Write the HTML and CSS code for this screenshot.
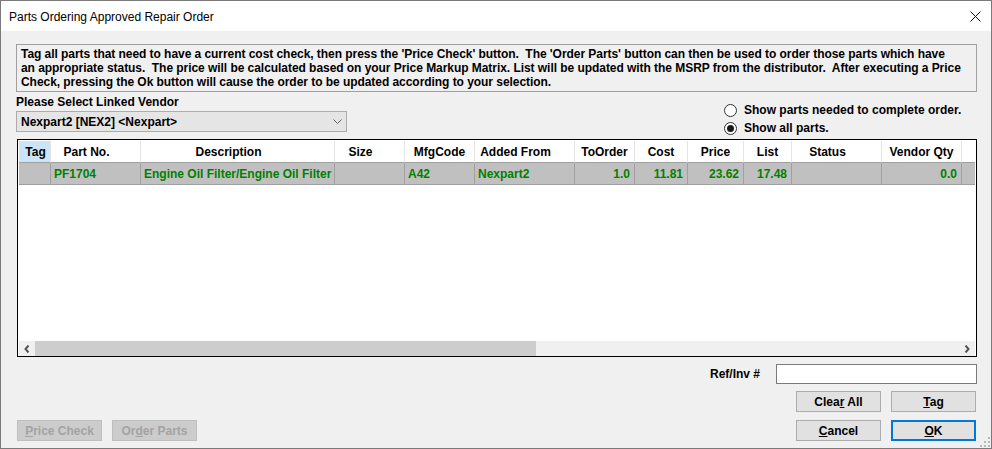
FILE: index.html
```html
<!DOCTYPE html>
<html>
<head>
<meta charset="utf-8">
<link rel="stylesheet" href="styles.css">
</head>
<body>
<div class="window">
  <div class="titlebar">
    <span class="title">Parts Ordering Approved Repair Order</span>
    <svg class="close" width="11" height="11" viewBox="0 0 11 11"><path d="M0.5 0.5 L10.5 10.5 M10.5 0.5 L0.5 10.5" stroke="#111" stroke-width="1" fill="none"/></svg>
  </div>
  <div class="content">
    <div class="info">
      <div class="line">Tag all parts that need to have a current cost check, then press the 'Price Check' button.&nbsp; The 'Order Parts' button can then be used to order those parts which have</div>
      <div class="line">an appropriate status.&nbsp; The price will be calculated based on your Price Markup Matrix. List will be updated with the MSRP from the distributor.&nbsp; After executing a Price</div>
      <div class="line">Check, pressing the Ok button will cause the order to be updated according to your selection.</div>
    </div>
    <div class="vendor-row">
      <div class="vendor">
        <div class="label">Please Select Linked Vendor</div>
        <div class="combo">
          <span>Nexpart2 [NEX2] &lt;Nexpart&gt;</span>
          <svg class="chev" width="9" height="5" viewBox="0 0 9 5"><path d="M0.5 0.5 L4.5 4.5 L8.5 0.5" stroke="#606060" stroke-width="1" fill="none"/></svg>
        </div>
      </div>
      <div class="radios">
        <div class="radio"><span class="circle"></span><span>Show parts needed to complete order.</span></div>
        <div class="radio"><span class="circle checked"></span><span>Show all parts.</span></div>
      </div>
    </div>
    <div class="grid">
      <div class="row head">
        <div class="c tagh">Tag</div>
        <div class="c s">Part No.</div>
        <div class="c s">Description</div>
        <div class="c s">Size</div>
        <div class="c">MfgCode</div>
        <div class="c s">Added From</div>
        <div class="c">ToOrder</div>
        <div class="c">Cost</div>
        <div class="c">Price</div>
        <div class="c">List</div>
        <div class="c s">Status</div>
        <div class="c">Vendor Qty</div>
        <div class="c last"></div>
      </div>
      <div class="row data">
        <div class="c"></div>
        <div class="c l">PF1704</div>
        <div class="c l">Engine Oil Filter/Engine Oil Filter</div>
        <div class="c l"></div>
        <div class="c l">A42</div>
        <div class="c l">Nexpart2</div>
        <div class="c r">1.0</div>
        <div class="c r">11.81</div>
        <div class="c r">23.62</div>
        <div class="c r">17.48</div>
        <div class="c l"></div>
        <div class="c r">0.0</div>
        <div class="c last"></div>
      </div>
      <div class="filler"></div>
      <div class="hscroll">
        <div class="sbtn"><svg width="6" height="8" viewBox="0 0 6 8"><path d="M4.5 0.5 L1.5 4 L4.5 7.5" stroke="#555" stroke-width="2" fill="none"/></svg></div>
        <div class="thumb"></div>
        <div class="track"></div>
        <div class="sbtn"><svg width="6" height="8" viewBox="0 0 6 8"><path d="M1.5 0.5 L4.5 4 L1.5 7.5" stroke="#555" stroke-width="2" fill="none"/></svg></div>
      </div>
    </div>
    <div class="bottom">
      <div class="left-btns">
        <div class="btn disabled"><span><u>P</u>rice Check</span></div>
        <div class="btn disabled"><span>Or<u>d</u>er Parts</span></div>
      </div>
      <div class="right-col">
        <div class="ref">
          <span class="ref-label">Ref/Inv #</span>
          <div class="input"></div>
        </div>
        <div class="btn-row">
          <div class="btn"><span>Clea<u>r</u> All</span></div>
          <div class="btn"><span><u>T</u>ag</span></div>
        </div>
        <div class="btn-row">
          <div class="btn"><span><u>C</u>ancel</span></div>
          <div class="btn default"><span><u>O</u>K</span></div>
        </div>
      </div>
    </div>
  </div>
  <svg class="grip" width="10" height="10" viewBox="0 0 10 10">
    <rect x="8" y="0" width="2" height="2" fill="#b8b8b8"/>
    <rect x="4" y="4" width="2" height="2" fill="#b8b8b8"/>
    <rect x="8" y="4" width="2" height="2" fill="#b8b8b8"/>
    <rect x="0" y="8" width="2" height="2" fill="#b8b8b8"/>
    <rect x="4" y="8" width="2" height="2" fill="#b8b8b8"/>
    <rect x="8" y="8" width="2" height="2" fill="#b8b8b8"/>
  </svg>
</div>
</body>
</html>
```
FILE: styles.css
```css
* { box-sizing: border-box; }
html, body { margin: 0; padding: 0; }
body {
  font-family: "Liberation Sans", Arial, sans-serif;
  font-size: 12px;
  font-weight: bold;
  color: #000;
  background: #f0f0f0;
}
.window {
  position: relative;
  width: 992px;
  height: 449px;
  border: 1px solid #7a7a7a;
  background: #f0f0f0;
  display: flex;
  flex-direction: column;
}
.titlebar {
  height: 30px;
  background: #fff;
  display: flex;
  align-items: center;
  padding-left: 8px;
  padding-right: 10px;
  font-weight: normal;
  font-size: 12px;
}
.title { flex: 1; padding-top: 1px; }
.close { display: block; }
.content {
  flex: 1;
  display: flex;
  flex-direction: column;
  padding: 0 14px 0 15px;
}
.info {
  margin-top: 13px;
  height: 48px;
  border: 1px solid #a0a0a0;
  padding: 2px 3px 2px 4px;
  line-height: 14px;
  letter-spacing: -0.05px;
}
.line { white-space: nowrap; }
.vendor-row {
  height: 47px;
  display: flex;
  justify-content: space-between;
}
.vendor { margin-top: 3px; }
.label { line-height: 14px; }
.combo {
  margin-top: 2px;
  width: 331px;
  height: 21px;
  background: #e5e5e5;
  border: 1px solid #acacac;
  display: flex;
  align-items: center;
  justify-content: space-between;
  padding: 0 4px 0 4px;
}
.chev { display: block; }
.radios {
  width: 253px;
  margin-top: 9px;
}
.radio {
  height: 18px;
  display: flex;
  align-items: center;
  gap: 7px;
}
.circle {
  width: 13px;
  height: 13px;
  border-radius: 50%;
  border: 1px solid #333;
  background: #fff;
  display: flex;
  align-items: center;
  justify-content: center;
}
.circle.checked::after {
  content: "";
  width: 7px;
  height: 7px;
  border-radius: 50%;
  background: #1a1a1a;
}
.grid {
  margin-left: 1px;
  height: 218px;
  border: 1px solid #000;
  padding: 1px 1px 0 1px;
  background: #fff;
  display: flex;
  flex-direction: column;
}
.row {
  display: grid;
  grid-template-columns: 32px 90px 194px 70px 70px 100px 60px 53px 56px 48px 90px 80px 1fr;
  height: 22px;
}
.c {
  border-right: 1px solid #e4e4e4;
  display: flex;
  align-items: center;
  white-space: nowrap;
  overflow: hidden;
}
.head .c {
  justify-content: center;
  border-bottom: 1px solid #a0a0a0;
  padding-top: 1px;
}
.head .c.s { padding-right: 18px; }
.head .tagh { background: #cce4f7; padding-left: 2px; }
.head .last { border-right: none; }
.data { background: #c0c0c0; color: #008000; }
.data .c {
  border-right: 1px solid #a0a0a0;
  border-bottom: 1px solid #a0a0a0;
  padding-top: 1px;
}
.data .last { border-right: none; }
.data .l { padding-left: 3px; }
.data .r { justify-content: flex-end; padding-right: 4px; }
.filler { height: 156px; }
.hscroll {
  height: 15px;
  display: flex;
  background: #f0f0f0;
}
.sbtn {
  width: 16px;
  display: flex;
  align-items: center;
  justify-content: center;
}
.thumb { width: 501px; background: #cdcdcd; }
.track { flex: 1; }
.bottom {
  flex: 1;
  display: flex;
  justify-content: space-between;
}
.left-btns {
  display: flex;
  gap: 10px;
  align-self: flex-end;
  margin-bottom: 7px;
  margin-left: 1px;
}
.right-col {
  display: flex;
  flex-direction: column;
  align-items: flex-end;
  padding-top: 7px;
  margin-right: 0;
}
.ref {
  display: flex;
  align-items: center;
  height: 20px;
}
.ref-label { margin-right: 16px; }
.input {
  width: 201px;
  height: 20px;
  background: #fff;
  border: 1px solid #7a7a7a;
}
.btn-row {
  display: flex;
  gap: 10px;
  margin-top: 7px;
  margin-right: 1px;
}
.btn-row + .btn-row { margin-top: 8px; }
.btn {
  width: 85px;
  height: 21px;
  background: #e1e1e1;
  border: 1px solid #adadad;
  display: flex;
  align-items: center;
  justify-content: center;
  white-space: nowrap;
}
.btn.default { border: 2px solid #0078d7; }
.btn.disabled {
  background: #cccccc;
  border-color: #bfbfbf;
  color: #a3a3a3;
}
.grip {
  position: absolute;
  right: 1px;
  bottom: 1px;
}
```
